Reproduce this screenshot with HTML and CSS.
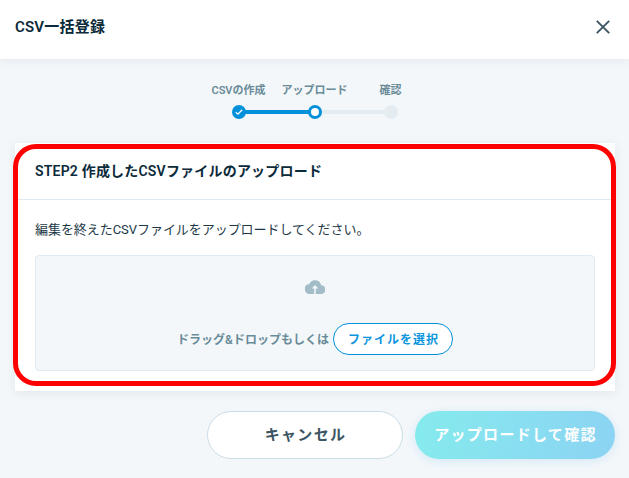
FILE: index.html
```html
<!DOCTYPE html>
<html lang="ja">
<head>
    <meta charset="UTF-8">
    <meta name="viewport" content="width=device-width, initial-scale=1.0">
    <title>CSV一括登録</title>
    <link rel="stylesheet" href="styles.css">
</head>
<body>

    <header class="header">
        <h1>CSV一括登録</h1>
        <button class="close-btn" aria-label="閉じる">
            <svg width="14" height="14" viewBox="0 0 14 14">
                <path d="M.8 .8 13.2 13.2M13.2 .8 .8 13.2" fill="none" stroke="#3c5563" stroke-width="1.9"/>
            </svg>
        </button>
    </header>

    <!-- Progress steps -->
    <ol class="steps">
        <li class="step done">
            <span class="step-label">CSVの作成</span>
            <span class="step-dot">
                <svg width="8" height="8" viewBox="0 0 8 8">
                    <path d="M.8 4.2 3 6.2 7.2 1.8" fill="none" stroke="#fff" stroke-width="1.3"/>
                </svg>
            </span>
        </li>
        <li class="step current">
            <span class="step-label">アップロード</span>
            <span class="step-dot"></span>
        </li>
        <li class="step">
            <span class="step-label">確認</span>
            <span class="step-dot"></span>
        </li>
    </ol>

    <!-- Upload card -->
    <main class="card">
        <h2>STEP2 作成したCSVファイルのアップロード</h2>
        <div class="card-body">
            <p>編集を終えたCSVファイルをアップロードしてください。</p>
            <div class="dropzone">
                <svg class="cloud" width="20" height="14" viewBox="0 0 20 14">
                    <path d="M16.1 5.3A6.2 6.2 0 0 0 4.4 3.9 5 5 0 0 0 5 14h11a4.3 4.3 0 0 0 .1-8.7z" fill="#a2bcc8"/>
                    <path d="M10 5 6.7 8.6H9.2V14H10.8V8.6H13.3z" fill="#f3f7fa"/>
                </svg>
                <div class="drop-row">
                    <span>ドラッグ&amp;ドロップもしくは</span>
                    <button class="file-btn">ファイルを選択</button>
                </div>
            </div>
        </div>
        <div class="highlight"></div>
    </main>

    <footer class="actions">
        <button class="btn cancel-btn">キャンセル</button>
        <button class="btn submit-btn">アップロードして確認</button>
    </footer>

</body>
</html>
```

FILE: styles.css
```css
* {
    box-sizing: border-box;
}

body {
    margin: 0;
    height: 478px;
    overflow: hidden;
    background-color: #f3f7fa;
    color: #0b2a3a;
    font-family: Roboto, "Noto Sans CJK JP", sans-serif;
}

h1, h2, p, ol {
    margin: 0;
    padding: 0;
}

button {
    font-family: inherit;
    padding: 0;
    cursor: pointer;
}

/* Header */
.header {
    display: flex;
    align-items: center;
    justify-content: space-between;
    height: 59px;
    padding: 0 19px 5px 15px;
    background-color: white;
    box-shadow: 0 1px 10px rgba(11, 42, 58, 0.08);
}

.header h1 {
    font-size: 15px;
    font-weight: 600;
    line-height: 22px;
    letter-spacing: 0.2px;
}

.close-btn {
    display: flex;
    background-color: transparent;
    border: none;
}

/* Progress steps */
.steps {
    display: grid;
    grid-template-columns: repeat(3, 76px);
    justify-content: center;
    height: 84px;
    padding-top: 24px;
    list-style: none;
}

.step {
    display: flex;
    flex-direction: column;
    align-items: center;
    gap: 6px;
    background: linear-gradient(#e4ecf1, #e4ecf1) no-repeat 0 27px / 100% 4px;
}

.step.done {
    background: linear-gradient(#0290db, #0290db) no-repeat 38px 27px / 38px 4px;
}

.step.current {
    background: linear-gradient(90deg, #0290db 50%, #e4ecf1 50%) no-repeat 0 27px / 100% 4px;
}

.step:last-child {
    background-size: 38px 4px;
}

.step-label {
    font-size: 11px;
    font-weight: 600;
    line-height: 16px;
    color: #6a8b98;
    white-space: nowrap;
}

.step-dot {
    display: flex;
    align-items: center;
    justify-content: center;
    width: 14px;
    height: 14px;
    border-radius: 50%;
    background-color: #e4ecf1;
}

.done .step-dot {
    background-color: #0290db;
}

.current .step-dot {
    background-color: white;
    border: 3px solid #0290db;
}

/* Upload card */
.card {
    position: relative;
    height: 248px;
    margin: 0 14px 0 15px;
    background-color: white;
    box-shadow: 0 2px 10px rgba(11, 42, 58, 0.08);
}

.card h2 {
    height: 57px;
    padding-left: 20px;
    border-bottom: 1px solid #dfe9f0;
    font-size: 14px;
    font-weight: 600;
    line-height: 56px;
    letter-spacing: 0.2px;
}

.card-body {
    padding: 20px 20px 0;
}

.card-body p {
    margin-bottom: 15px;
    font-size: 13px;
    line-height: 20px;
    letter-spacing: -0.05px;
    color: #1d3948;
}

.dropzone {
    display: flex;
    flex-direction: column;
    align-items: center;
    height: 116px;
    padding-top: 24px;
    border: 1px solid #e0eaf0;
    border-radius: 4px;
    background-color: #f3f7fa;
}

.drop-row {
    display: flex;
    align-items: center;
    gap: 4px;
    margin-top: 29px;
    font-size: 12px;
    font-weight: 600;
    color: #6a8b98;
}

.drop-row span {
    padding-bottom: 2px;
}

.file-btn {
    width: 120px;
    height: 32px;
    padding: 0 0 2px 1px;
    border: 1px solid #0290db;
    border-radius: 16px;
    background-color: white;
    color: #0d96dd;
    font-size: 12px;
    font-weight: 600;
    letter-spacing: 1px;
}

/* Red frame around the upload area */
.highlight {
    position: absolute;
    top: 1px;
    left: -2px;
    width: 603px;
    height: 242px;
    border: 5px solid #ff0000;
    border-radius: 23px;
    pointer-events: none;
}

/* Bottom buttons */
.actions {
    display: flex;
    justify-content: flex-end;
    gap: 12px;
    padding: 20px 14px 0 0;
}

.btn {
    height: 48px;
    padding: 0 0 4px 1px;
    border-radius: 24px;
    font-size: 15px;
    font-weight: 600;
    letter-spacing: 1.3px;
}

.cancel-btn {
    width: 196px;
    border: 1px solid #cadde6;
    background-color: white;
    color: #3c5563;
}

.submit-btn {
    width: 200px;
    border: none;
    background: linear-gradient(100deg, #85ebed, #8cd3f3);
    box-shadow: 0 2px 10px rgba(140, 200, 243, 0.3);
    color: white;
}
```
